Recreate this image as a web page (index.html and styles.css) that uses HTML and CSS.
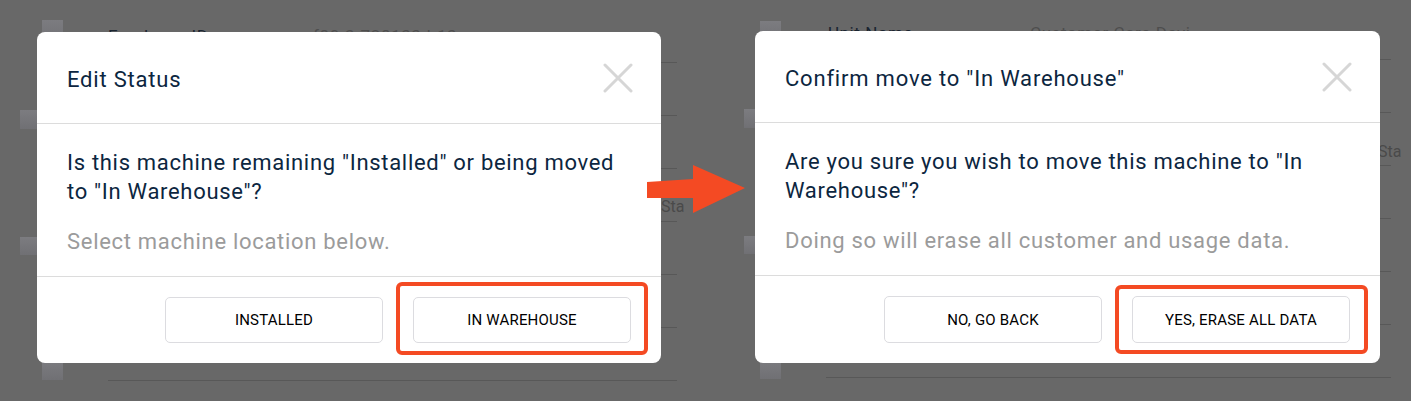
FILE: index.html
```html
<!DOCTYPE html>
<html lang="en">
<head>
  <meta charset="UTF-8">
  <title>Edit Status flow</title>
  <meta name="viewport" content="width=device-width, initial-scale=1.0">
  <link rel="stylesheet" href="styles.css">
</head>
<body>

  <div class="stage">

    <!-- step 1 -->
    <section class="shot shot-left">
      <div class="page">
        <div class="side">
          <span class="thumb thumb-a"></span>
          <span class="thumb thumb-b"></span>
          <span class="thumb thumb-c"></span>
          <span class="thumb thumb-d"></span>
        </div>
        <div class="table">
          <div class="row"><span class="label">Employee ID</span><span class="value">f80-3-728133-b13</span></div>
          <div class="row"></div>
          <div class="row"></div>
          <div class="row"><span class="edge">Sta</span></div>
          <div class="row"></div>
          <div class="row"></div>
          <div class="row"></div>
        </div>
      </div>

      <div class="modal">
        <div class="modal-head">
          <h3>Edit Status</h3>
          <svg class="close" viewBox="0 0 30 30" width="30" height="30">
            <path d="M2 2 L28 28 M28 2 L2 28" />
          </svg>
        </div>
        <div class="modal-body">
          <p class="question">Is this machine remaining "Installed" or being moved to "In Warehouse"?</p>
          <p class="hint">Select machine location below.</p>
        </div>
        <div class="modal-foot">
          <button>Installed</button>
          <div class="pick pick-a"><button>In Warehouse</button></div>
        </div>
      </div>
    </section>

    <!-- step 2 -->
    <section class="shot shot-right">
      <div class="page">
        <div class="side">
          <span class="thumb thumb-a"></span>
          <span class="thumb thumb-b"></span>
          <span class="thumb thumb-c"></span>
          <span class="thumb thumb-d"></span>
        </div>
        <div class="table">
          <div class="row"><span class="label">Unit Name</span><span class="value">Customer Care Devi</span></div>
          <div class="row"></div>
          <div class="row"><span class="edge">Sta</span></div>
          <div class="row"></div>
          <div class="row"></div>
          <div class="row"></div>
          <div class="row"></div>
        </div>
      </div>

      <div class="modal">
        <div class="modal-head">
          <h3>Confirm move to "In Warehouse"</h3>
          <svg class="close" viewBox="0 0 30 30" width="30" height="30">
            <path d="M2 2 L28 28 M28 2 L2 28" />
          </svg>
        </div>
        <div class="modal-body">
          <p class="question">Are you sure you wish to move this machine to "In Warehouse"?</p>
          <p class="hint">Doing so will erase all customer and usage data.</p>
        </div>
        <div class="modal-foot">
          <button>No, go back</button>
          <div class="pick pick-b"><button>Yes, erase all data</button></div>
        </div>
      </div>
    </section>

    <svg class="arrow" viewBox="0 0 101 50" width="101" height="50">
      <polygon points="1,18 47,15 47,1 99,24 47,49 47,34 1,34" />
    </svg>
  </div>

</body>
</html>
```

FILE: styles.css
```css
* {
  box-sizing: border-box;
}

body {
  margin: 0;
  background: #686868;
  font-family: Roboto, 'Noto Sans', sans-serif;
  height: 401px;
  overflow: hidden;
}

.stage {
  position: relative;
  display: flex;
  height: 401px;
}

.shot {
  position: relative;
  height: 401px;
}

.shot-left {
  width: 718px;
}

.shot-right {
  width: 693px;
}

/* page behind the dim overlay */
.page {
  display: grid;
  grid-template-columns: 108px 1fr;
}

.side {
  display: flex;
  flex-direction: column;
  align-items: flex-start;
}

.thumb {
  display: block;
  background: linear-gradient(#7c7c80, #707074);
}

.thumb-a { margin: 20px 0 0 42px; width: 21px; height: 22px; }
.thumb-b { margin: 68px 0 0 20px; width: 22px; height: 19px; }
.thumb-c { margin: 108px 0 0 20px; width: 22px; height: 18px; }
.thumb-d { margin: 105px 0 0 42px; width: 21px; height: 20px; }

.shot-right .thumb-a { margin-top: 21px; }
.shot-right .thumb-b { margin-left: 26px; margin-top: 66px; }
.shot-right .thumb-c { margin-left: 26px; }

.table {
  padding-top: 10px;
}

.shot-left .table { width: 569px; }
.shot-right .table { width: 565px; padding-top: 7px; }

.row {
  display: flex;
  align-items: center;
  height: 53px;
  border-bottom: 1px solid #585858;
  font-size: 17px;
  letter-spacing: 0.6px;
  white-space: nowrap;
}

.label {
  width: 205px;
  color: #1a2430;
}

.shot-right .label {
  padding-left: 2px;
  width: 204px;
}

.value {
  color: #4e4e4e;
}

.edge {
  margin-left: 553px;
  margin-top: 22px;
  font-size: 16px;
  letter-spacing: 0;
  color: #4a4a4a;
}

.shot-right .edge {
  margin-left: 552px;
  margin-top: 24px;
}

/* modal */
.modal {
  position: absolute;
  left: 37px;
  top: 32px;
  width: 624px;
  background: #fff;
  border-radius: 8px;
}

.shot-right .modal {
  top: 31px;
  width: 625px;
}

.modal-head {
  display: flex;
  align-items: center;
  justify-content: space-between;
  height: 92px;
  padding: 3px 28px 0 30px;
  border-bottom: 1px solid #dcdcdc;
}

.modal-head h3 {
  margin: 0;
  font-size: 22px;
  font-weight: 400;
  letter-spacing: 0.8px;
  color: #0c2640;
}

.close {
  margin-top: -2px;
}

.close path {
  stroke: #d6d6d6;
  stroke-width: 3;
  stroke-linecap: round;
  fill: none;
}

.modal-body {
  padding: 24px 40px 20px 30px;
}

.modal-body p {
  margin: 0;
  font-size: 22px;
  letter-spacing: 0.7px;
  line-height: 29px;
}

.question {
  color: #0c2640;
}

.hint {
  margin-top: 21px !important;
  color: #9b9b9b;
}

.modal-foot {
  display: flex;
  justify-content: flex-end;
  gap: 30px;
  padding: 20px 30px;
  border-top: 1px solid #dcdcdc;
}

.modal-foot button {
  width: 218px;
  height: 46px;
  background: #fff;
  border: 1px solid #dcdce0;
  border-radius: 5px;
  font-family: Roboto, sans-serif;
  font-size: 15px;
  font-weight: 400;
  color: #000;
  text-transform: uppercase;
  letter-spacing: 0.2px;
}

.shot-right .modal-foot button {
  height: 47px;
}

.pick {
  position: relative;
}

.pick::after {
  content: "";
  position: absolute;
  border: 4px solid #f44a23;
  border-radius: 6px;
}

.pick-a::after {
  inset: -15px -17px -12px -17px;
}

.pick-b::after {
  inset: -11px -18px -11px -17px;
}

.arrow {
  position: absolute;
  left: 646px;
  top: 164px;
}

.arrow polygon {
  fill: #f44a23;
}
```
